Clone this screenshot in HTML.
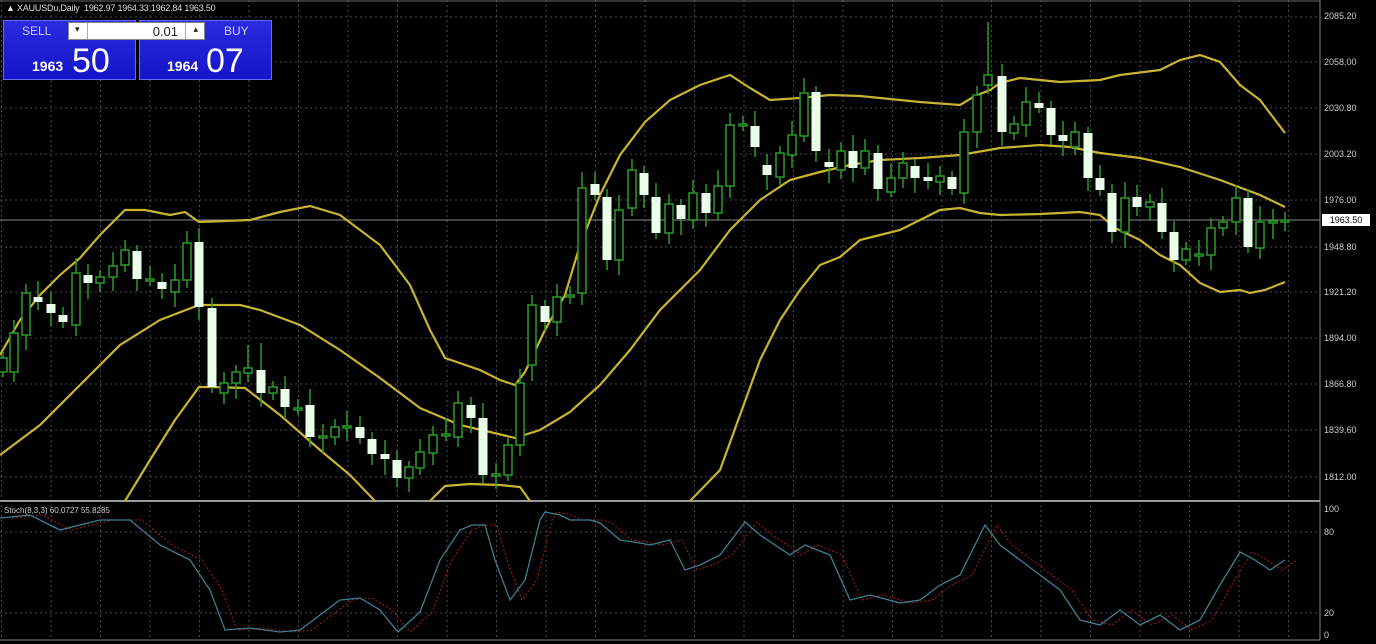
<!DOCTYPE html>
<html><head><meta charset="utf-8"><style>
html,body{margin:0;padding:0;background:#000;width:1376px;height:644px;overflow:hidden;font-family:"Liberation Sans",sans-serif}
#c{position:absolute;left:0;top:0}
.ttl{position:absolute;left:6px;top:3px;color:#ddd;font-size:9px;letter-spacing:-0.2px}
.box{position:absolute;top:20px;height:60px;width:133px;background:linear-gradient(#2a2ae0,#1414c8);border:1px solid #6a6af0;box-sizing:border-box;color:#fff}
.lbl{position:absolute;top:3px;font-size:12px;color:#cfd0ff}
.small{position:absolute;bottom:5px;font-size:14px;font-weight:bold}
.big{position:absolute;bottom:-2px;font-size:34px}
.lot{position:absolute;left:68px;top:22px;width:137px;height:18px;background:#fff;border:1px solid #888;box-sizing:border-box;font-size:13px;color:#222}
.ax{position:absolute;left:1324px;font-size:9px;color:#ccc}
</style></head><body>
<svg id="c" width="1376" height="644" xmlns="http://www.w3.org/2000/svg"></svg>
<div class="ttl">▲ XAUUSDu,Daily&nbsp; 1962.97 1964.33 1962.84 1963.50</div>
<div class="box" style="left:3px"><span class="lbl" style="left:18px">SELL</span><span class="small" style="left:28px">1963</span><span class="big" style="left:68px">50</span></div>
<div class="box" style="left:139px"><span class="lbl" style="left:84px">BUY</span><span class="small" style="left:27px">1964</span><span class="big" style="left:66px">07</span></div>
<div class="lot"><span style="position:absolute;left:6px;top:1px;font-size:9px">▾</span><span style="position:absolute;right:26px;top:1px">0.01</span><span style="position:absolute;right:6px;top:1px;font-size:9px">▴</span><span style="position:absolute;left:18px;top:0;width:1px;height:16px;background:#aaa"></span><span style="position:absolute;right:18px;top:0;width:1px;height:16px;background:#aaa"></span></div>
<div style="position:absolute;left:4px;top:506px;color:#ccc;font-size:8px">Stoch(8,3,3) 60.0727 55.8285</div>
<div class="ax" style="top:11px">2085.20</div>
<div class="ax" style="top:57px">2058.00</div>
<div class="ax" style="top:103px">2030.80</div>
<div class="ax" style="top:149px">2003.20</div>
<div class="ax" style="top:195px">1976.00</div>
<div style="position:absolute;left:1322px;top:214px;width:48px;height:12px;background:#fff;color:#000;font-size:9px;text-align:center;line-height:12px">1963.50</div>
<div class="ax" style="top:242px">1948.80</div>
<div class="ax" style="top:287px">1921.20</div>
<div class="ax" style="top:333px">1894.00</div>
<div class="ax" style="top:379px">1866.80</div>
<div class="ax" style="top:425px">1839.60</div>
<div class="ax" style="top:472px">1812.00</div>
<div class="ax" style="top:504px">100</div>
<div class="ax" style="top:527px">80</div>
<div class="ax" style="top:608px">20</div>
<div class="ax" style="top:630px">0</div>
<script>
var s=document.getElementById('c'),h='';
// grid
var hy=[17,62,108,154,200,247,292,338,384,430,477,532,613];
hy.forEach(function(y){h+='<line x1="0" x2="1320" y1="'+y+'" y2="'+y+'" stroke="#4a4a4a" stroke-dasharray="2,3"/>';});
for(var x=1.5;x<1320;x+=49.5){h+='<line x1="'+x+'" x2="'+x+'" y1="0" y2="640" stroke="#4a4a4a" stroke-dasharray="2,3"/>';}
h+='<line x1="0" x2="1320" y1="220" y2="220" stroke="#8a8a8a" stroke-width="1"/>';
h+='<line x1="1320" x2="1320" y1="0" y2="640" stroke="#888"/>';
h+='<line x1="0" x2="1320" y1="501" y2="501" stroke="#999" stroke-width="2"/>';
h+='<line x1="0" x2="1320" y1="1" y2="1" stroke="#666"/>';
h+='<line x1="0" x2="1320" y1="640" y2="640" stroke="#888"/>';
// bands
function pl(p,c,w,d){return '<polyline fill="none" stroke="'+c+'" stroke-width="'+w+'" '+(d?'stroke-dasharray="'+d+'" ':'')+'points="'+p+'"/>';}
var up="0,355 20,320 40,295 60,275 80,258 100,235 125,210 145,210 170,215 185,212 199,222 250,220 280,212 310,206 340,215 380,245 410,285 430,330 445,358 480,370 500,380 515,385 525,372 545,330 565,295 580,245 600,195 620,155 645,122 670,100 700,85 730,75 750,88 770,100 800,98 830,95 860,96 880,98 920,102 960,105 975,96 990,90 1000,83 1020,78 1040,80 1060,82 1100,80 1120,75 1160,70 1180,60 1200,55 1220,62 1240,85 1260,100 1285,133";
var md="0,455 40,425 80,385 120,345 160,320 199,305 240,305 260,310 300,325 340,350 380,378 420,408 460,425 490,432 515,438 540,430 570,412 600,385 630,350 660,310 700,270 730,230 760,200 790,180 820,172 850,165 880,160 920,158 960,155 1000,148 1040,145 1070,147 1100,153 1140,158 1180,167 1220,180 1260,195 1285,207";
var lo1="125,501 150,460 175,420 199,387 210,387 245,388 280,415 320,450 350,475 375,501";
var lo2="430,501 445,486 470,484 500,485 520,487 530,501";
var lo3="690,501 720,470 740,415 760,360 780,320 800,290 820,265 840,257 860,240 880,235 900,230 920,220 940,210 960,208 980,213 1000,215 1040,214 1080,212 1100,215 1115,228 1140,240 1160,255 1180,265 1200,283 1220,292 1240,290 1250,293 1265,290 1285,282";
[up,md,lo1,lo2,lo3].forEach(function(p){h+=pl(p,'#c8b430',2.2);});
// candles [x,top,bottom,type]
var C=[[3,358,372,'G'],[14,333,372,'G'],[26,293,335,'G'],[38,297,302,'W'],[51,304,313,'W'],[63,315,322,'W'],[76,273,325,'G'],[88,275,283,'W'],[100,277,283,'G'],[113,266,277,'G'],[125,250,265,'G'],[137,251,279,'W'],[150,279,281,'G'],[162,282,289,'W'],[175,280,292,'G'],[187,243,280,'G'],[199,242,307,'W'],[212,308,387,'W'],[224,383,393,'G'],[236,372,383,'G'],[248,368,373,'G'],[261,370,393,'W'],[273,387,393,'G'],[285,389,407,'W'],[298,408,410,'G'],[310,405,437,'W'],[323,436,438,'G'],[335,427,437,'G'],[347,426,428,'G'],[360,427,438,'W'],[372,439,454,'W'],[385,454,459,'W'],[397,460,478,'W'],[409,467,478,'G'],[420,452,468,'G'],[433,435,453,'G'],[446,434,436,'G'],[458,403,437,'G'],[471,405,418,'W'],[483,418,475,'W'],[496,474,476,'G'],[508,445,475,'G'],[520,383,445,'G'],[532,305,365,'G'],[545,306,322,'W'],[557,297,322,'G'],[570,295,297,'G'],[582,188,293,'G'],[595,184,195,'W'],[607,197,260,'W'],[619,210,260,'G'],[632,170,208,'G'],[644,173,195,'W'],[656,197,233,'W'],[669,204,233,'G'],[681,205,219,'W'],[693,193,220,'G'],[706,193,213,'W'],[718,186,213,'G'],[730,125,186,'G'],[743,124,126,'G'],[755,126,147,'W'],[767,165,175,'W'],[780,153,177,'G'],[792,135,155,'G'],[804,93,136,'G'],[816,92,151,'W'],[829,162,167,'W'],[841,151,170,'G'],[853,151,168,'W'],[865,151,168,'G'],[878,153,189,'W'],[891,178,192,'G'],[903,163,178,'G'],[915,166,178,'W'],[928,177,181,'W'],[940,176,182,'G'],[952,177,189,'W'],[964,132,193,'G'],[977,95,132,'G'],[988,75,85,'G'],[1002,76,132,'W'],[1014,124,133,'G'],[1026,102,125,'G'],[1039,103,108,'W'],[1051,108,135,'W'],[1063,135,141,'W'],[1075,132,147,'G'],[1088,133,178,'W'],[1100,178,190,'W'],[1112,193,232,'W'],[1125,198,232,'G'],[1137,197,207,'W'],[1150,202,207,'G'],[1162,203,232,'W'],[1174,232,260,'W'],[1186,249,260,'G'],[1199,254,256,'G'],[1211,228,255,'G'],[1223,222,228,'G'],[1236,198,222,'G'],[1248,198,247,'W'],[1260,222,248,'G'],[1273,221,223,'G'],[1285,220,222,'G']];
var hiO={988:22,199:228,804:78,212:298,261:343,248:345};
C.forEach(function(c,i){var x=c[0],t=c[1],b=c[2],w=(c[3]=='W');var hi=hiO[x]||t-6-(i*7%11),lo=b+5+(i*5%12);
h+='<line x1="'+x+'" x2="'+x+'" y1="'+hi+'" y2="'+lo+'" stroke="#2a9a2a" stroke-width="1.5"/>';
var bh=Math.max(b-t,2);
if(w)h+='<rect x="'+(x-4.5)+'" y="'+t+'" width="9" height="'+bh+'" fill="#eaffea"/>';
else h+='<rect x="'+(x-4)+'" y="'+t+'" width="8" height="'+bh+'" fill="#000" stroke="#2a9a2a" stroke-width="1.5"/>';});
// stoch
var st="0,518 30,515 60,530 80,525 100,520 130,520 160,545 190,560 210,590 225,630 250,628 265,630 280,632 300,630 320,615 340,600 360,598 380,610 398,632 420,612 440,560 460,530 472,525 485,525 495,560 510,600 525,580 540,520 545,512 560,515 570,520 590,520 600,523 620,540 640,543 650,545 670,540 685,570 700,565 720,555 745,522 760,535 790,555 805,545 830,555 850,600 870,595 900,603 920,600 940,585 960,575 985,525 1000,545 1020,560 1040,575 1060,590 1080,620 1100,625 1120,610 1140,625 1160,615 1180,630 1200,620 1220,585 1240,552 1255,560 1270,570 1285,560";
var sg=st.split(' ').map(function(p){var a=p.split(',');return (+a[0]+12)+','+a[1];}).join(' ');
h+=pl(sg,'#a02020',1,'2,2');
h+=pl(st,'#3f7f90',1.3);
s.innerHTML=h;
</script>
</body></html>
